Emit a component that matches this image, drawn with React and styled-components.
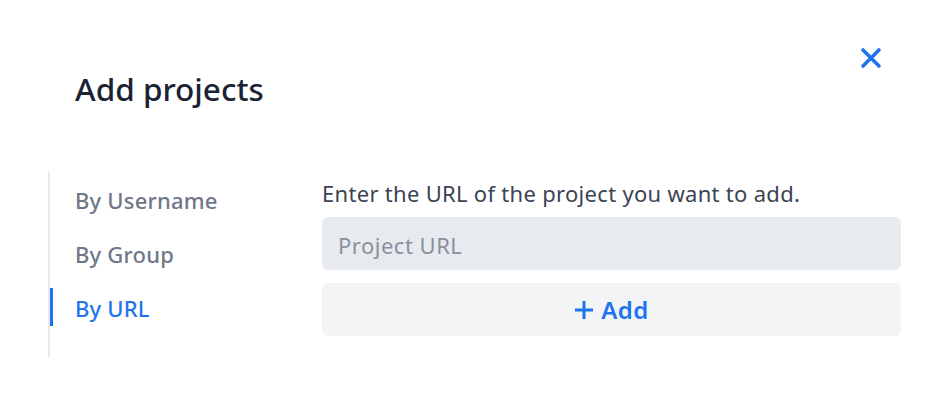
import React from "react";
import styled, { createGlobalStyle } from "styled-components";

const GlobalStyle = createGlobalStyle`
  body {
    margin: 0;
    background: #ffffff;
    font-family: "Noto Sans", "Open Sans", sans-serif;
  }
`;

const Modal = styled.div`
  width: 952px;
  height: 411px;
  box-sizing: border-box;
  padding: 0 51px 0 48px;
  background: #ffffff;
`;

const Header = styled.div`
  display: flex;
  justify-content: space-between;
  align-items: flex-start;
  padding: 44px 0 0 27px;
  height: 172px;
  box-sizing: border-box;
`;

const Title = styled.h2`
  margin: 25px 0 0;
  font-size: 31.5px;
  font-weight: 500;
  line-height: 40px;
  color: #1a2333;
`;

const CloseButton = styled.button`
  border: none;
  background: none;
  padding: 0;
  width: 28px;
  height: 28px;
  display: flex;
  align-items: center;
  justify-content: center;
  color: #1f74ee;
  margin-right: 16px;
  cursor: pointer;
`;

const Body = styled.div`
  display: flex;
`;

const Nav = styled.ul`
  list-style: none;
  margin: 0;
  padding: 8px 0 31px;
  width: 274px;
  box-sizing: border-box;
  border-left: 2px solid #e8eaef;
  display: flex;
  flex-direction: column;
  gap: 16px;
`;

const NavItem = styled.li`
  display: flex;
  align-items: center;
  height: 38px;
  padding: 1px 0 0 22px;
  box-sizing: border-box;
  border-left: 3px solid ${(p) => (p.$active ? "#1f74ee" : "transparent")};
  font-size: 22px;
  font-weight: 500;
  letter-spacing: 0.2px;
  color: ${(p) => (p.$active ? "#1f74ee" : "#6f7887")};
  cursor: pointer;
`;

const Content = styled.div`
  flex: 1;
  display: flex;
  flex-direction: column;
  padding-top: 7px;
`;

const Hint = styled.p`
  margin: 0 0 9px;
  font-size: 22px;
  letter-spacing: 0.3px;
  line-height: 29px;
  color: #3b4454;
`;

const Input = styled.input`
  height: 53px;
  box-sizing: border-box;
  border: none;
  border-radius: 6px;
  background: #e7eaef;
  padding: 2px 16px 0;
  font-family: inherit;
  font-size: 22px;
  letter-spacing: 0.5px;
  color: #1a2333;
  outline: none;
  &::placeholder {
    color: #8a919c;
  }
`;

const AddButton = styled.button`
  margin-top: 13px;
  height: 53px;
  border: none;
  border-radius: 6px;
  background: #f3f4f6;
  display: flex;
  align-items: center;
  justify-content: center;
  gap: 7px;
  font-family: inherit;
  font-size: 24px;
  font-weight: 600;
  letter-spacing: 0.4px;
  color: #1f74ee;
  cursor: pointer;
`;

export default function App() {
  return (
    <>
      <GlobalStyle />
      <Modal>
        <Header>
          <Title>Add projects</Title>
          <CloseButton aria-label="Close">
            <svg width="22" height="22" viewBox="0 0 22 22">
              <path
                d="M3 3 L19 19 M19 3 L3 19"
                stroke="currentColor"
                strokeWidth="3.6"
                strokeLinecap="round"
              />
            </svg>
          </CloseButton>
        </Header>
        <Body>
          <Nav>
            <NavItem>By Username</NavItem>
            <NavItem>By Group</NavItem>
            <NavItem $active>By URL</NavItem>
          </Nav>
          <Content>
            <Hint>Enter the URL of the project you want to add.</Hint>
            <Input placeholder="Project URL" />
            <AddButton>
              <svg width="20" height="20" viewBox="0 0 20 20">
                <path
                  d="M10 1 V19 M1 10 H19"
                  stroke="currentColor"
                  strokeWidth="3"
                />
              </svg>
              Add
            </AddButton>
          </Content>
        </Body>
      </Modal>
    </>
  );
}
